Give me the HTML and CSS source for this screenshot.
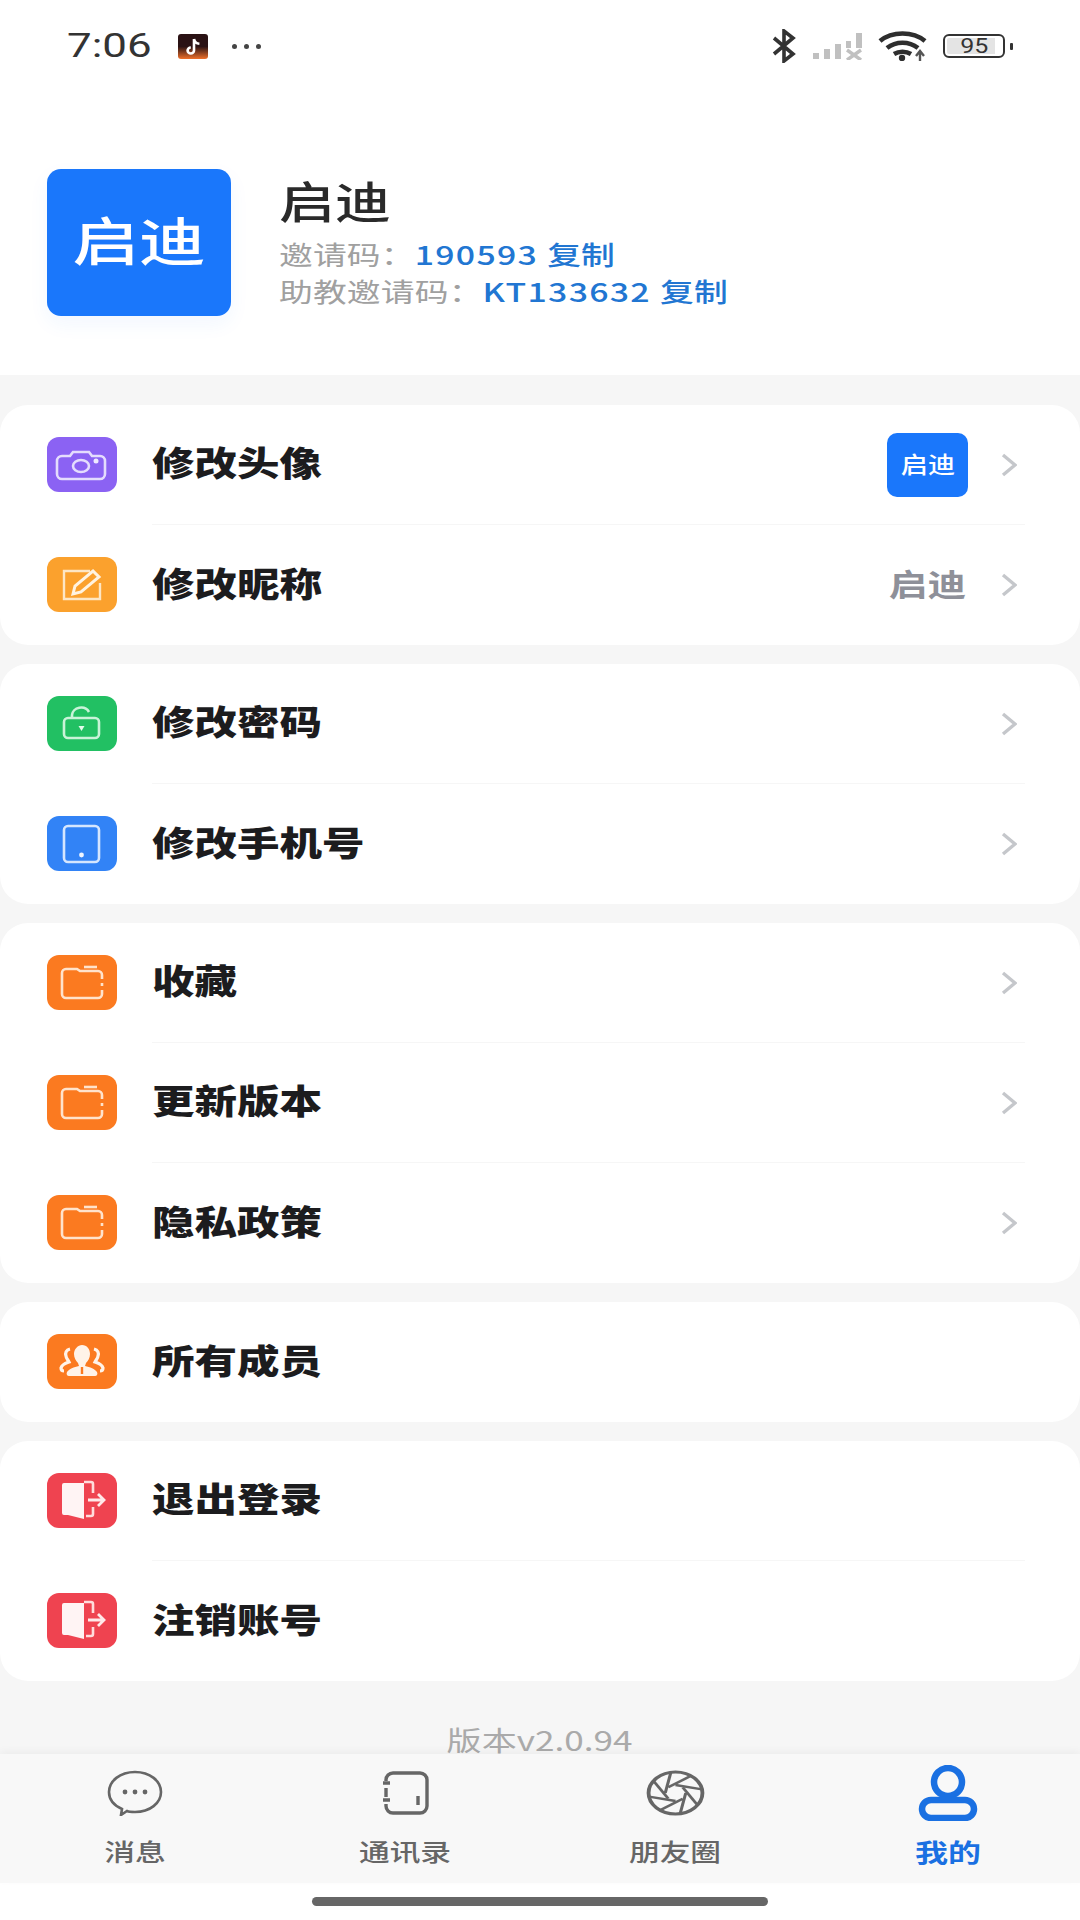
FILE: index.html
```html
<!DOCTYPE html>
<html lang="zh-CN">
<head>
  <meta charset="UTF-8" />
  <meta name="viewport" content="width=device-width, initial-scale=1" />
  <title>我的</title>
  <link rel="stylesheet" href="styles.css">
</head>
<body>
  <div class="page">
    <!-- Status bar -->
    <div class="status-bar">
      <div class="status-left">
        <span class="time">7:06</span>
        <svg class="tiktok" viewBox="0 0 30 25">
          <defs>
            <linearGradient id="ttBg" x1="0" y1="0" x2="0" y2="1">
              <stop offset="0.5" stop-color="#2a1214" />
              <stop offset="1" stop-color="#f0702a" />
            </linearGradient>
          </defs>
          <rect width="30" height="25" rx="3" fill="url(#ttBg)" />
          <path d="M16 5v11.5a3.2 3 0 1 1-3.2-3M16 5c.6 3 2.6 4.6 5.4 4.8" fill="none" stroke="#fff" stroke-width="2.6" />
        </svg>
        <span class="dots"><i></i><i></i><i></i></span>
      </div>
      <div class="status-right">
        <svg class="bt" viewBox="0 0 26 34">
          <path d="M3 9l19 16-9 7V2l9 7L3 25" fill="none" stroke="#333" stroke-width="3.6" />
        </svg>
        <svg class="signal" viewBox="0 0 50 27">
          <g fill="#c0c0c0">
            <rect x="0" y="20" width="6" height="6" />
            <rect x="11" y="16" width="6" height="10" />
            <rect x="22" y="11" width="6" height="15" />
            <rect x="33" y="8" width="5" height="7" />
            <rect x="43" y="0" width="6" height="15" />
          </g>
          <path d="M34 17l14 10M48 17l-14 10" stroke="#c0c0c0" stroke-width="3.4" />
        </svg>
        <svg class="wifi" viewBox="0 0 49 30">
          <g fill="none" stroke="#2e2e2e" stroke-width="4.6">
            <path d="M2 10c12-10 33-10 45 0" />
            <path d="M9 17c9-7 22-7 31 0" />
            <path d="M16 23c5-3 12-3 17 0" />
          </g>
          <circle cx="24" cy="27" r="3.200" fill="#2e2e2e" />
          <path d="M42 30v-9M38 25l4-5 4 5" fill="none" stroke="#555" stroke-width="2.400" />
        </svg>
        <div class="battery">
          <div class="battery-body"><span>95</span></div>
          <div class="battery-tip"></div>
        </div>
      </div>
    </div>

    <!-- Profile -->
    <div class="profile">
      <div class="avatar"><span>启迪</span></div>
      <div class="profile-info">
        <div class="name">启迪</div>
        <div class="code">邀请码：<a><span class="num">190593</span> 复制</a></div>
        <div class="code">助教邀请码：<a><span class="num">KT133632</span> 复制</a></div>
      </div>
    </div>

    <div class="main">
      <div class="card">
        <div class="row">
          <svg class="row-icon" viewBox="0 0 70 55">
            <rect width="70" height="55" rx="12" fill="#8b62f3" />
            <path d="M15 19h8l3-4h16l3 4h8a5 5 0 0 1 5 5v13a5 5 0 0 1-5 5H15a5 5 0 0 1-5-5V24a5 5 0 0 1 5-5z" fill="none" stroke="#e4dcfd" stroke-width="2.600" />
            <ellipse cx="34" cy="29" rx="8" ry="6" fill="none" stroke="#e4dcfd" stroke-width="2.600" />
            <circle cx="49" cy="24" r="2.500" fill="#efeaff" />
          </svg>
          <div class="row-main">
            <span class="label">修改头像</span>
            <div class="mini-avatar"><span>启迪</span></div>
            <svg class="chevron" viewBox="0 0 16 24"><path d="M2 2l12 10L2 22" /></svg>
          </div>
        </div>
        <div class="row">
          <svg class="row-icon" viewBox="0 0 70 55">
            <rect width="70" height="55" rx="12" fill="#fba12d" />
            <path d="M43 14H17v28h36V26" fill="none" stroke="#fde6c4" stroke-width="2.400" />
            <path d="M26 37l2-8 18-15 6 6-18 15z" fill="#fba12d" stroke="#fff3e0" stroke-width="3" />
          </svg>
          <div class="row-main">
            <span class="label">修改昵称</span>
            <span class="value">启迪</span>
            <svg class="chevron" viewBox="0 0 16 24"><path d="M2 2l12 10L2 22" /></svg>
          </div>
        </div>
      </div>

      <div class="card">
        <div class="row">
          <svg class="row-icon" viewBox="0 0 70 55">
            <rect width="70" height="55" rx="12" fill="#22c063" />
            <rect x="17" y="22" width="35" height="20" rx="4" fill="none" stroke="#c9f3d8" stroke-width="2.600" />
            <path d="M25 22v-3a9 8 0 0 1 17-3" fill="none" stroke="#c9f3d8" stroke-width="2.600" />
            <path d="M31.500 30h6l-3 5z" fill="#e3fbeb" />
          </svg>
          <div class="row-main">
            <span class="label">修改密码</span>
            <svg class="chevron" viewBox="0 0 16 24"><path d="M2 2l12 10L2 22" /></svg>
          </div>
        </div>
        <div class="row">
          <svg class="row-icon" viewBox="0 0 70 55">
            <rect width="70" height="55" rx="12" fill="#3283f6" />
            <rect x="17" y="10" width="35" height="36" rx="4" fill="none" stroke="#d5e6fe" stroke-width="2.600" />
            <circle cx="34.500" cy="39" r="2.400" fill="#eef5ff" />
          </svg>
          <div class="row-main">
            <span class="label">修改手机号</span>
            <svg class="chevron" viewBox="0 0 16 24"><path d="M2 2l12 10L2 22" /></svg>
          </div>
        </div>
      </div>

      <div class="card">
        <div class="row">
          <svg class="row-icon" viewBox="0 0 70 55">
            <rect width="70" height="55" rx="12" fill="#fb7a20" />
            <path d="M55 24v-4a4 4 0 0 0-4-4H33l-3-2H19a4 4 0 0 0-4 4v21a4 4 0 0 0 4 4h32a4 4 0 0 0 4-4v-4M55 28v3" fill="none" stroke="#ffe3cc" stroke-width="2.600" />
            <path d="M37 12h13" stroke="#ffe3cc" stroke-width="2.600" />
          </svg>
          <div class="row-main">
            <span class="label">收藏</span>
            <svg class="chevron" viewBox="0 0 16 24"><path d="M2 2l12 10L2 22" /></svg>
          </div>
        </div>
        <div class="row">
          <svg class="row-icon" viewBox="0 0 70 55">
            <rect width="70" height="55" rx="12" fill="#fb7a20" />
            <path d="M55 24v-4a4 4 0 0 0-4-4H33l-3-2H19a4 4 0 0 0-4 4v21a4 4 0 0 0 4 4h32a4 4 0 0 0 4-4v-4M55 28v3" fill="none" stroke="#ffe3cc" stroke-width="2.600" />
            <path d="M37 12h13" stroke="#ffe3cc" stroke-width="2.600" />
          </svg>
          <div class="row-main">
            <span class="label">更新版本</span>
            <svg class="chevron" viewBox="0 0 16 24"><path d="M2 2l12 10L2 22" /></svg>
          </div>
        </div>
        <div class="row">
          <svg class="row-icon" viewBox="0 0 70 55">
            <rect width="70" height="55" rx="12" fill="#fb7a20" />
            <path d="M55 24v-4a4 4 0 0 0-4-4H33l-3-2H19a4 4 0 0 0-4 4v21a4 4 0 0 0 4 4h32a4 4 0 0 0 4-4v-4M55 28v3" fill="none" stroke="#ffe3cc" stroke-width="2.600" />
            <path d="M37 12h13" stroke="#ffe3cc" stroke-width="2.600" />
          </svg>
          <div class="row-main">
            <span class="label">隐私政策</span>
            <svg class="chevron" viewBox="0 0 16 24"><path d="M2 2l12 10L2 22" /></svg>
          </div>
        </div>
      </div>

      <div class="card">
        <div class="row">
          <svg class="row-icon" viewBox="0 0 70 55">
            <rect width="70" height="55" rx="12" fill="#fb7a20" />
            <path d="M35 11c5 0 8 4 8 9 0 4-2 7-4 9l-1 3c5 1 10 3 12 6 1 2 0 4-2 4H22c-2 0-3-2-2-4 2-3 7-5 12-6l-1-3c-2-2-4-5-4-9 0-5 4-9 8-9z" fill="#fff3e8" />
            <path d="M23 15c-4 1-5 4-4 7 0 2 2 4 3 6-3 1-7 2-8 6 0 2 1 3 3 3M47 15c4 1 5 4 4 7 0 2-2 4-3 6 3 1 7 2 8 6 0 2-1 3-3 3" fill="none" stroke="#fff3e8" stroke-width="3.200" />
            <path d="M35 33v7" stroke="#fb7a20" stroke-width="2.400" />
          </svg>
          <div class="row-main">
            <span class="label">所有成员</span>
          </div>
        </div>
      </div>

      <div class="card">
        <div class="row">
          <svg class="row-icon" viewBox="0 0 70 55">
            <rect width="70" height="55" rx="12" fill="#ef4350" />
            <path d="M17 10h20v36l-16-4h-4a2 2 0 0 1-2-2V12a2 2 0 0 1 2-2z" fill="#fff4f4" />
            <path d="M37 9h7a2 2 0 0 1 2 2v9M46 34v7a2 2 0 0 1-2 2h-5" fill="none" stroke="#ffdcdc" stroke-width="2.600" />
            <path d="M41 27h15M51 21l6 6-6 6" fill="none" stroke="#ffe9e9" stroke-width="2.800" />
          </svg>
          <div class="row-main">
            <span class="label">退出登录</span>
          </div>
        </div>
        <div class="row">
          <svg class="row-icon" viewBox="0 0 70 55">
            <rect width="70" height="55" rx="12" fill="#ef4350" />
            <path d="M17 10h20v36l-16-4h-4a2 2 0 0 1-2-2V12a2 2 0 0 1 2-2z" fill="#fff4f4" />
            <path d="M37 9h7a2 2 0 0 1 2 2v9M46 34v7a2 2 0 0 1-2 2h-5" fill="none" stroke="#ffdcdc" stroke-width="2.600" />
            <path d="M41 27h15M51 21l6 6-6 6" fill="none" stroke="#ffe9e9" stroke-width="2.800" />
          </svg>
          <div class="row-main">
            <span class="label">注销账号</span>
          </div>
        </div>
      </div>

      <div class="version"><span>版本v2.0.94</span></div>
    </div>

    <!-- Bottom tabs -->
    <div class="tab-bar">
      <div class="tab">
        <div class="tab-icon">
          <svg width="56" height="46" viewBox="0 0 56 46" fill="none" stroke="#666" stroke-width="2.600">
            <path d="M15 39C6 35 2 29 2 22 2 11 13 2 28 2s26 9 26 20-11 20-26 20c-3 0-6 0-8-1l-6 4z" />
            <g fill="#666" stroke="none">
              <circle cx="18" cy="22" r="2.400" />
              <circle cx="28" cy="22" r="2.400" />
              <circle cx="38" cy="22" r="2.400" />
            </g>
          </svg>
        </div>
        <span class="tab-label">消息</span>
      </div>
      <div class="tab">
        <div class="tab-icon">
          <svg width="47" height="44" viewBox="0 0 47 44" fill="none" stroke="#666" stroke-width="3.400">
            <path d="M4 10V9a7 7 0 0 1 7-7h27a7 7 0 0 1 7 7v26a7 7 0 0 1-7 7H11a7 7 0 0 1-7-7v-2M4 17v9" />
            <path d="M1 12h7M1 29h7M36 25v9" />
          </svg>
        </div>
        <span class="tab-label">通讯录</span>
      </div>
      <div class="tab">
        <div class="tab-icon">
          <svg width="59" height="46" viewBox="0 0 46 46" preserveAspectRatio="none" fill="none" stroke="#666" stroke-width="3">
            <circle cx="23" cy="23" r="21" />
            <g stroke-width="2.400">
              <path d="M31 23L26.600 43.700" />
              <path d="M31 23L26.600 43.700" transform="rotate(45 23 23)" />
              <path d="M31 23L26.600 43.700" transform="rotate(90 23 23)" />
              <path d="M31 23L26.600 43.700" transform="rotate(135 23 23)" />
              <path d="M31 23L26.600 43.700" transform="rotate(180 23 23)" />
              <path d="M31 23L26.600 43.700" transform="rotate(225 23 23)" />
              <path d="M31 23L26.600 43.700" transform="rotate(270 23 23)" />
              <path d="M31 23L26.600 43.700" transform="rotate(315 23 23)" />
            </g>
          </svg>
        </div>
        <span class="tab-label">朋友圈</span>
      </div>
      <div class="tab active">
        <div class="tab-icon">
          <svg width="60" height="56" viewBox="0 0 60 56" fill="none" stroke="#1a70e2" stroke-width="6.500">
            <ellipse cx="30" cy="17" rx="14" ry="14" />
            <rect x="4" y="35" width="52" height="18" rx="9" />
          </svg>
        </div>
        <span class="tab-label">我的</span>
      </div>
    </div>

    <div class="home-area"><div class="home-bar"></div></div>
  </div>
</body>
</html>
```
FILE: styles.css
```css
* {
  box-sizing: border-box;
}

body {
  margin: 0;
  background: #fff;
  font-family: "Noto Sans CJK SC", "Noto Sans", sans-serif;
  color: #1c1c1e;
}

.page {
  width: 1080px;
  height: 1920px;
  display: flex;
  flex-direction: column;
  overflow: hidden;
}

/* status bar */
.status-bar {
  height: 92px;
  padding: 29px 67px 0 67px;
  display: flex;
  justify-content: space-between;
  align-items: flex-start;
}

.status-left {
  display: flex;
  align-items: center;
  height: 34px;
}

.time {
  width: 111px;
  font-family: Roboto, sans-serif;
  font-size: 33px;
  line-height: 34px;
  color: #333;
  transform: scaleX(1.33);
  transform-origin: left center;
}

.tiktok {
  width: 30px;
  height: 25px;
}

.dots {
  margin-left: 24px;
  display: flex;
  gap: 7px;
}

.dots i {
  width: 5px;
  height: 5px;
  border-radius: 50%;
  background: #444;
}

.status-right {
  display: flex;
  align-items: center;
  height: 34px;
}

.bt {
  width: 26px;
  height: 34px;
}

.signal {
  width: 50px;
  height: 27px;
  margin-left: 16px;
}

.wifi {
  width: 49px;
  height: 30px;
  margin-left: 15px;
}

.battery {
  margin-left: 16px;
  display: flex;
  align-items: center;
}

.battery-body {
  width: 62px;
  height: 24px;
  border: 2.5px solid #333;
  border-radius: 6px;
  display: flex;
  align-items: center;
  justify-content: center;
  background: linear-gradient(90deg, #e4e4e4 86%, #fff 86%);
  background-clip: content-box;
  padding: 2px;
}

.battery-body span {
  font-family: Roboto, sans-serif;
  font-size: 20px;
  line-height: 18px;
  color: #333;
  transform: scaleX(1.25);
}

.battery-tip {
  width: 3px;
  height: 7px;
  margin-left: 5px;
  border-radius: 1px;
  background: #333;
}

/* profile header */
.profile {
  height: 283px;
  padding: 77px 0 0 47px;
  display: flex;
  gap: 48px;
}

.avatar {
  width: 184px;
  height: 147px;
  padding-bottom: 9px;
  border-radius: 14px;
  background: #1a77fb;
  box-shadow: 0 8px 20px rgba(26, 119, 251, 0.06);
  display: flex;
  align-items: center;
  justify-content: center;
  color: #fff;
  font-size: 52px;
  font-weight: 500;
}

.avatar span {
  transform: scaleX(1.28);
}

.profile-info {
  padding-top: 3px;
}

.name {
  height: 56px;
  margin-bottom: 7px;
  font-size: 44px;
  font-weight: 500;
  line-height: 56px;
  color: #2a2a2a;
  transform: scaleX(1.27);
  transform-origin: left center;
}

.code {
  height: 37px;
  font-size: 26px;
  line-height: 37px;
  letter-spacing: 0.1px;
  color: #a0a0a0;
  white-space: nowrap;
  transform: scaleX(1.3);
  transform-origin: left center;
}

.code a {
  color: #2176d2;
  font-weight: 500;
}

.code .num {
  letter-spacing: 1px;
  margin-right: 1px;
}

/* menu */
.main {
  flex: 1;
  min-height: 0;
  overflow: hidden;
  padding-top: 30px;
  background: #f6f6f6;
  display: flex;
  flex-direction: column;
  gap: 19px;
}

.card {
  flex-shrink: 0;
  background: #fff;
  border-radius: 28px;
}

.row {
  height: 120px;
  padding-left: 47px;
  display: flex;
  align-items: center;
}

.row-icon {
  width: 70px;
  height: 55px;
  margin-top: -2px;
  flex-shrink: 0;
}

.row-main {
  flex: 1;
  height: 120px;
  margin: 0 55px 0 35px;
  padding-right: 8px;
  border-bottom: 1.5px solid #f6f6f6;
  display: flex;
  align-items: center;
}

.row:last-child .row-main {
  border-bottom: none;
}

.label {
  margin-right: auto;
  margin-bottom: 6px;
  font-size: 34px;
  font-weight: 900;
  color: #1c1c1e;
  white-space: nowrap;
  transform: scaleX(1.25);
  transform-origin: left center;
}

.mini-avatar {
  width: 81px;
  height: 64px;
  padding-bottom: 4px;
  border-radius: 10px;
  background: #1a77fb;
  color: #fff;
  font-size: 23px;
  font-weight: 500;
  display: flex;
  align-items: center;
  justify-content: center;
}

.mini-avatar span {
  transform: scaleX(1.18);
}

.value {
  width: 81px;
  margin-bottom: 6px;
  text-align: center;
  font-size: 31px;
  font-weight: 700;
  color: #8e9099;
  transform: scaleX(1.25);
}

.chevron {
  width: 16px;
  height: 24px;
  margin-left: 33px;
}

.chevron path {
  fill: none;
  stroke: #c5c7cb;
  stroke-width: 3.4;
}

.version {
  flex-shrink: 0;
  margin-top: 28px;
  text-align: center;
  font-size: 27px;
  line-height: 24px;
  color: #aaa;
}

.version span {
  display: inline-block;
  transform: scaleX(1.3);
}

/* bottom tabs */
.tab-bar {
  height: 129px;
  background: #f8f8f8;
  box-shadow: 0 -3px 8px rgba(0, 0, 0, 0.04);
  display: grid;
  grid-template-columns: repeat(4, 1fr);
  position: relative;
}

.tab {
  padding-top: 11px;
  display: flex;
  flex-direction: column;
  align-items: center;
}

.tab.active {
  padding-left: 6px;
}

.tab-icon {
  height: 56px;
  display: flex;
  align-items: center;
  justify-content: center;
}

.tab-label {
  margin-top: 14px;
  font-size: 24px;
  font-weight: 500;
  line-height: 32px;
  color: #666;
  transform: scaleX(1.28);
}

.tab.active .tab-label {
  font-size: 25px;
  font-weight: 700;
  color: #1a70e2;
  transform: scaleX(1.32);
}

.home-area {
  height: 37px;
  padding-top: 14px;
  display: flex;
  justify-content: center;
}

.home-bar {
  width: 456px;
  height: 9px;
  border-radius: 5px;
  background: #666;
}
```
